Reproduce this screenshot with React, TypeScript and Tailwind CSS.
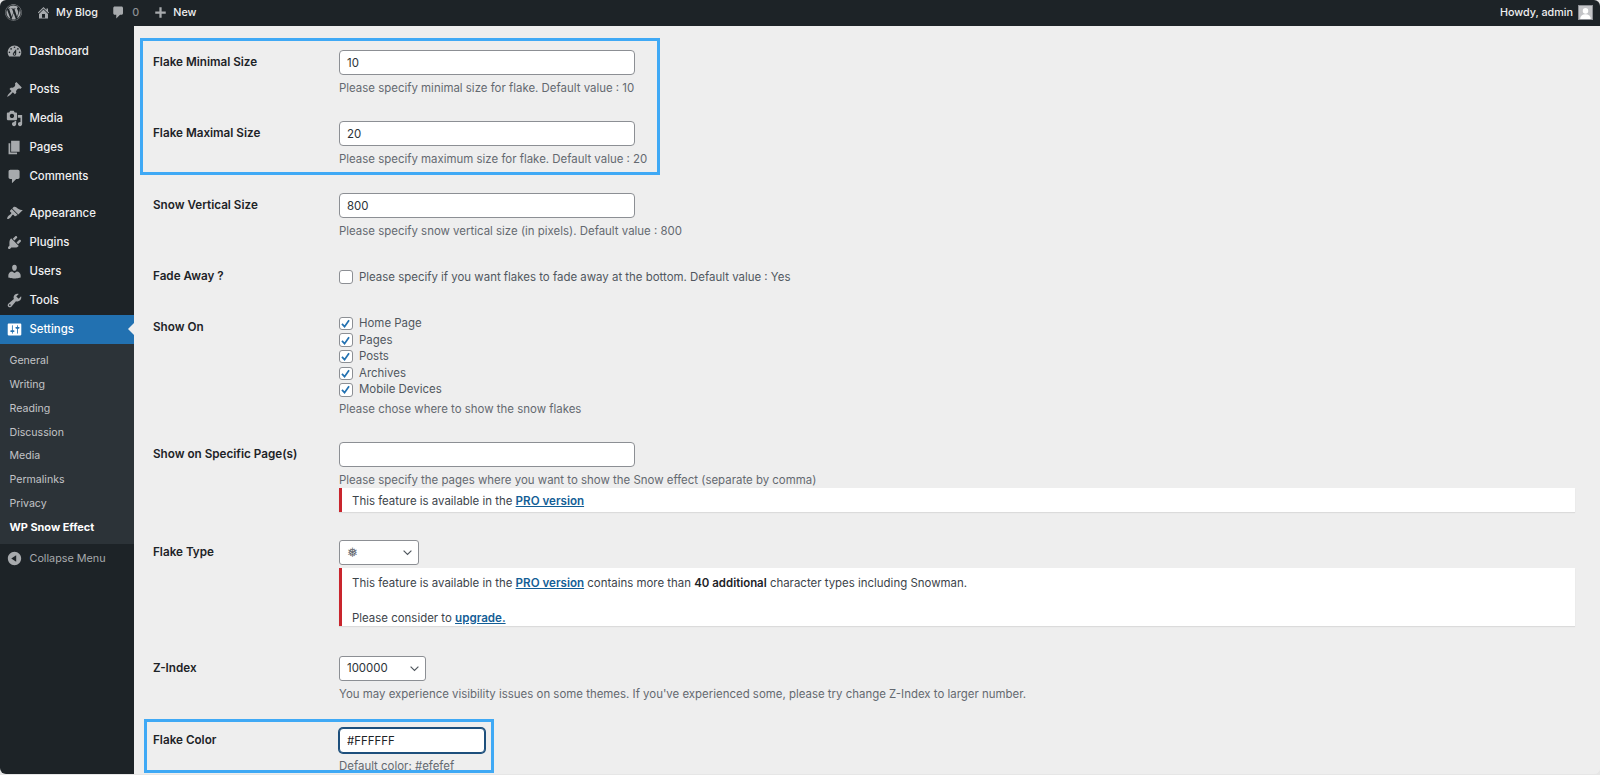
import React from 'react';
import { FaWordpress } from 'react-icons/fa';

const icons: Record<string, string> = {
  dashboard:
    'M3.76 16h12.48c1.1-1.37 1.76-3.11 1.76-5 0-4.42-3.58-8-8-8s-8 3.58-8 8c0 1.89.66 3.63 1.76 5zM10 4c.55 0 1 .45 1 1s-.45 1-1 1-1-.45-1-1 .45-1 1-1zM6 6c.55 0 1 .45 1 1s-.45 1-1 1-1-.45-1-1 .45-1 1-1zm8 0c.55 0 1 .45 1 1s-.45 1-1 1-1-.45-1-1 .45-1 1-1zm-5.37 5.55L12 7v6c0 1.1-.9 2-2 2s-2-.9-2-2c0-.57.24-1.08.63-1.45zM4 10c.55 0 1 .45 1 1s-.45 1-1 1-1-.45-1-1 .45-1 1-1zm12 0c.55 0 1 .45 1 1s-.45 1-1 1-1-.45-1-1 .45-1 1-1zm-5 3c0-.55-.45-1-1-1s-1 .45-1 1 .45 1 1 1 1-.45 1-1z',
  posts:
    'M10.44 3.02l1.82-1.82 6.36 6.35-1.83 1.82c-1.05-.68-2.48-.57-3.41.36l-.75.75c-.92.93-1.04 2.35-.35 3.41l-1.83 1.82-2.41-2.41-2.8 2.79c-.42.42-3.38 2.71-3.8 2.29s1.86-3.39 2.28-3.81l2.79-2.79L4.1 9.36l1.83-1.82c1.05.69 2.48.57 3.4-.36l.75-.75c.93-.92 1.05-2.35.36-3.41z',
  media:
    'M13 11V4c0-.55-.45-1-1-1h-1.67L9 1H5L3.67 3H2c-.55 0-1 .45-1 1v7c0 .55.45 1 1 1h10c.55 0 1-.45 1-1zM7 4.5c1.38 0 2.5 1.12 2.5 2.5S8.38 9.5 7 9.5 4.5 8.38 4.5 7 5.62 4.5 7 4.5zM14 6h5v10.5c0 1.38-1.12 2.5-2.5 2.5S14 17.88 14 16.5s1.12-2.5 2.5-2.5c.17 0 .34.02.5.05V9h-3V6zm-4 8.05V13h2v3.5c0 1.38-1.12 2.5-2.5 2.5S7 17.88 7 16.5 8.12 14 9.5 14c.17 0 .34.02.5.05z',
  pages: 'M6 15V2h10v13H6zm-1 1h8v2H3V5h2v11z',
  comments:
    'M5 2h9c1.1 0 2 .9 2 2v7c0 1.1-.9 2-2 2h-2l-5 5v-5H5c-1.1 0-2-.9-2-2V4c0-1.1.9-2 2-2z',
  appearance:
    'M14.48 11.06L7.41 3.99l1.5-1.5c.5-.56 2.3-.47 3.51.32 1.21.8 1.43 1.28 2.91 2.1 1.18.64 2.45 1.26 4.45.85zM13.77 11.77L6.7 4.7 4.93 6.47c-.39.39-.39 1.02 0 1.41l1.06 1.06c.39.39.39 1.03 0 1.42-.6.6-1.43 1.11-2.21 1.69-.35.26-.7.53-1.01.84-1.2 1.2-1.6 3-1.3 3.5s2.3-.1 3.5-1.3c.31-.31.58-.66.84-1.01.58-.78 1.09-1.61 1.69-2.21.39-.39 1.03-.39 1.42 0l1.06 1.06c.39.39 1.02.39 1.41 0z',
  plugins:
    'M13.11 4.36L9.87 7.6 8 5.73l3.24-3.24c.35-.34 1.05-.2 1.56.32.52.51.66 1.21.31 1.55zm-8 1.77l.91-1.12 9.01 9.01-1.19.84c-.71.71-2.63 1.16-3.82 1.16H6.14L4.9 17.26c-.59.59-1.54.59-2.12 0-.59-.58-.59-1.53 0-2.12l1.24-1.24v-3.88c0-1.13.4-3.19 1.09-3.89zm7.26 3.97l3.24-3.24c.34-.35 1.04-.21 1.55.31.52.51.66 1.21.31 1.55l-3.24 3.25z',
  users:
    'M10 9.25c-2.27 0-2.73-3.44-2.73-3.44C7 4.02 7.82 2 9.97 2c2.16 0 2.98 2.02 2.71 3.81 0 0-.41 3.44-2.68 3.44zm0 2.57L12.72 10c2.39 0 4.52 2.33 4.52 4.53v2.49s-3.65 1.13-7.24 1.13c-3.65 0-7.24-1.13-7.24-1.13v-2.49c0-2.25 1.94-4.48 4.47-4.48z',
  tools:
    'M16.68 9.77c-1.34 1.34-3.3 1.67-4.95.99l-5.41 6.52c-.99.99-2.59.99-3.58 0s-.99-2.59 0-3.57l6.52-5.42c-.68-1.65-.35-3.61.99-4.95 1.28-1.28 3.12-1.62 4.72-1.06l-2.89 2.89 2.82 2.82 2.86-2.87c.53 1.58.18 3.39-1.08 4.65zM3.81 16.21c.4.39 1.04.39 1.43 0 .4-.4.4-1.04 0-1.43-.39-.4-1.03-.4-1.43 0-.39.39-.39 1.03 0 1.43z',
  settings:
    'M18 16V4c0-.55-.45-1-1-1H3c-.55 0-1 .45-1 1v12c0 .55.45 1 1 1h14c.55 0 1-.45 1-1zM8 11h1c.55 0 1 .45 1 1s-.45 1-1 1H8v1.5c0 .28-.22.5-.5.5s-.5-.22-.5-.5V13H6c-.55 0-1-.45-1-1s.45-1 1-1h1V5.5c0-.28.22-.5.5-.5s.5.22.5.5V11zm5-2h-1c-.55 0-1-.45-1-1s.45-1 1-1h1V5.5c0-.28.22-.5.5-.5s.5.22.5.5V7h1c.55 0 1 .45 1 1s-.45 1-1 1h-1v5.5c0 .28-.22.5-.5.5s-.5-.22-.5-.5V9z',
  collapse:
    'M10 2.16c4.33 0 7.84 3.51 7.84 7.84s-3.51 7.84-7.84 7.84S2.16 14.33 2.16 10 5.71 2.16 10 2.16zm2 11.72V6.12L6.18 9.97z',
  home: 'M16 8.5l1.53 1.53-1.06 1.06L10 4.62l-6.47 6.47-1.06-1.06L10 2.5l4 4v-2h2v4zm-6-2.46l6 5.99V18H4v-5.97zM12 17v-5H8v5h4z',
  plus: 'M17 8.5v3h-5.5v5.5h-3v-5.5H3v-3h5.5V3h3v5.5z',
};

const Icon: React.FC<{ name: string; className?: string }> = ({ name, className }) => (
  <svg viewBox="0 0 20 20" fill="currentColor" className={className}>
    <path d={icons[name]} />
  </svg>
);

const Chevron = () => (
  <svg viewBox="0 0 20 20" fill="none" stroke="#50575e" strokeWidth="1.8" className="pointer-events-none absolute right-[5px] top-[6px] h-[13px] w-[13px]">
    <path d="M4 7l6 6 6-6" />
  </svg>
);

const MenuItem: React.FC<{ icon: string; label: string; active?: boolean }> = ({ icon, label, active }) => (
  <div className={active ? 'relative flex h-[29px] items-center bg-[#2271b1] text-white' : 'flex h-[29px] items-center text-[#f0f0f1]'}>
    <Icon name={icon} className={active ? 'ml-[5.5px] h-[17px] w-[17px] text-white' : 'ml-[5.5px] h-[17px] w-[17px] text-[#a7aaad]'} />
    <span className="ml-[7px]">{label}</span>
    {active && (
      <span className="absolute right-0 top-[8px] h-0 w-0 border-y-[6.5px] border-r-[6.5px] border-y-transparent border-r-[#eeeeee]" />
    )}
  </div>
);

const Sidebar = () => (
  <aside className="flex w-[134px] shrink-0 flex-col bg-[#1d2327] text-[11.4px] font-medium">
    <div className="pt-[11.25px]">
      <MenuItem icon="dashboard" label="Dashboard" />
    </div>
    <div className="pt-[9.25px]">
      <MenuItem icon="posts" label="Posts" />
      <MenuItem icon="media" label="Media" />
      <MenuItem icon="pages" label="Pages" />
      <MenuItem icon="comments" label="Comments" />
    </div>
    <div className="pt-[8px]">
      <MenuItem icon="appearance" label="Appearance" />
      <MenuItem icon="plugins" label="Plugins" />
      <MenuItem icon="users" label="Users" />
      <MenuItem icon="tools" label="Tools" />
      <MenuItem icon="settings" label="Settings" active />
    </div>
    <div className="bg-[#2c3338] pb-[5.2px] pt-[5.4px] text-[10.6px] font-normal text-[#c3c4c7]">
      {['General', 'Writing', 'Reading', 'Discussion', 'Media', 'Permalinks', 'Privacy'].map((item) => (
        <div key={item} className="flex h-[23.7px] items-center pl-[9.5px]">
          {item}
        </div>
      ))}
      <div className="flex h-[23.7px] items-center pl-[9.5px] text-[10.9px] font-bold text-white">WP Snow Effect</div>
    </div>
    <div className="flex h-[29px] items-center font-normal text-[#a7aaad]">
      <Icon name="collapse" className="ml-[5.5px] h-[17px] w-[17px]" />
      <span className="ml-[7px] text-[10.8px]">Collapse Menu</span>
    </div>
  </aside>
);

const TopBar = () => (
  <header className="flex h-[25.7px] shrink-0 items-center bg-[#1d2327] text-[10.75px] font-medium text-[#f0f0f1]">
    <FaWordpress className="ml-[5px] h-[17px] w-[17px] text-[#a7aaad]" />
    <Icon name="home" className="ml-[13.5px] h-[15px] w-[15px] text-[#a7aaad]" />
    <span className="ml-[5.5px]">My Blog</span>
    <Icon name="comments" className="ml-[13px] h-[15px] w-[15px] text-[#a7aaad]" />
    <span className="ml-[6.5px] text-[#8c8f94]">0</span>
    <Icon name="plus" className="ml-[14px] h-[15px] w-[15px] text-[#a7aaad]" />
    <span className="ml-[5px]">New</span>
    <span className="ml-auto">Howdy, admin</span>
    <div className="ml-[5px] mr-[7px] flex h-[15px] w-[15px] items-end justify-center overflow-hidden border border-[#8c8f94] bg-[#c3c4c7]">
      <svg viewBox="0 0 16 16" className="h-[13px] w-[13px]" fill="#fff">
        <circle cx="8" cy="6" r="3.4" />
        <path d="M1.5 16c0-4 2.5-6 6.5-6s6.5 2 6.5 6z" />
      </svg>
    </div>
  </header>
);

const Row: React.FC<{ label: string; children: React.ReactNode }> = ({ label, children }) => (
  <div className="grid grid-cols-[186px_1fr] py-[12.75px]">
    <div className="mt-[4px] text-[11.7px] font-semibold text-[#1d2327]">{label}</div>
    <div>{children}</div>
  </div>
);

const TextInput: React.FC<{ value?: string }> = ({ value }) => (
  <input
    type="text"
    defaultValue={value}
    className="block h-[25px] w-[296px] rounded-[4px] border border-[#8c8f94] bg-white px-[7px] pt-[1px] text-[11.45px] text-[#2c3338] outline-none"
  />
);

const Help: React.FC<{ children: React.ReactNode }> = ({ children }) => (
  <p className="mt-[5px] h-[16px] text-[#646970]">{children}</p>
);

const Check: React.FC<{ checked?: boolean }> = ({ checked }) => (
  <span className="flex h-[13.5px] w-[13.5px] shrink-0 items-center justify-center rounded-[3px] border border-[#8c8f94] bg-white">
    {checked && (
      <svg viewBox="0 0 14 14" className="h-[11px] w-[11px]" fill="none" stroke="#2271b1" strokeWidth="2.2">
        <path d="M2.5 7.5L5.8 11 11.5 3" />
      </svg>
    )}
  </span>
);

const ProLink: React.FC<{ children: React.ReactNode }> = ({ children }) => (
  <a className="text-[11.6px] font-semibold text-[#135e96] underline">{children}</a>
);

const Select: React.FC<{ value: string; widthClass: string; textClass: string }> = ({ value, widthClass, textClass }) => (
  <div className={`relative ${widthClass}`}>
    <select
      defaultValue={value}
      className={`block h-[25px] w-full appearance-none rounded-[3px] border border-[#8c8f94] bg-white pl-[7px] outline-none ${textClass}`}
    >
      <option value={value}>{value}</option>
    </select>
    <Chevron />
  </div>
);

const Main = () => (
  <main className="relative min-w-0 flex-1 overflow-hidden bg-[#eeeeee] pl-[19px] pr-[25px] pt-[11.25px] text-[11.45px] leading-[17px]">
    <Row label="Flake Minimal Size">
      <TextInput value="10" />
      <Help>Please specify minimal size for flake. Default value : 10</Help>
    </Row>
    <Row label="Flake Maximal Size">
      <TextInput value="20" />
      <Help>Please specify maximum size for flake. Default value : 20</Help>
    </Row>
    <Row label="Snow Vertical Size">
      <TextInput value="800" />
      <Help>Please specify snow vertical size (in pixels). Default value : 800</Help>
    </Row>
    <Row label="Fade Away ?">
      <div className="flex h-[25px] items-center pt-[1px] text-[#50575e]">
        <Check />
        <span className="ml-[6.5px]">Please specify if you want flakes to fade away at the bottom. Default value : Yes</span>
      </div>
    </Row>
    <Row label="Show On">
      <div className="mt-[0.5px]">
        {['Home Page', 'Pages', 'Posts', 'Archives', 'Mobile Devices'].map((item) => (
          <div key={item} className="flex h-[16.6px] items-center text-[#50575e]">
            <Check checked />
            <span className="ml-[6.5px]">{item}</span>
          </div>
        ))}
      </div>
      <p className="mt-[3px] h-[15px] text-[#646970]">Please chose where to show the snow flakes</p>
    </Row>
    <Row label="Show on Specific Page(s)">
      <TextInput />
      <Help>Please specify the pages where you want to show the Snow effect (separate by comma)</Help>
      <div className="mb-[3px] mt-[0.5px] flex h-[23.5px] items-center border-l-[3.5px] border-[#c9252d] bg-white pl-[10px] pt-[3px] text-[#3c434a] shadow-[0_1px_1px_rgba(0,0,0,0.08)]">
        <span>
          This feature is available in the <ProLink>PRO version</ProLink>
        </span>
      </div>
    </Row>
    <Row label="Flake Type">
      <Select value="❅" widthClass="w-[80px]" textClass="text-[13px] text-[#646970]" />
      <div className="mb-[4.5px] mt-[3px] h-[58px] border-l-[3.5px] border-[#c9252d] bg-white pl-[10px] pt-[6.5px] text-[#3c434a] shadow-[0_1px_1px_rgba(0,0,0,0.08)]">
        <p>
          This feature is available in the <ProLink>PRO version</ProLink> contains more than{' '}
          <b className="font-semibold text-[#1d2327]">40 additional</b> character types including Snowman.
        </p>
        <p className="mt-[18.5px]">
          Please consider to <ProLink>upgrade.</ProLink>
        </p>
      </div>
    </Row>
    <Row label="Z-Index">
      <Select value="100000" widthClass="w-[87px]" textClass="text-[11.45px] text-[#2c3338]" />
      <Help>You may experience visibility issues on some themes. If you've experienced some, please try change Z-Index to larger number.</Help>
    </Row>
    <Row label="Flake Color">
      <input
        type="text"
        defaultValue="#FFFFFF"
        className="block h-[25px] w-[146px] rounded-[4px] border border-[#1d4f7c] bg-white px-[7px] pt-[1px] text-[11.45px] text-[#1d2327] shadow-[0_0_0_1px_#1d4f7c] outline-none"
      />
      <Help>Default color: #efefef</Help>
    </Row>
    {/* callouts drawn over the form */}
    <div className="pointer-events-none absolute left-[6px] top-[12.3px] h-[137.5px] w-[520px] border-[3.5px] border-[#3fa9f5]" />
    <div className="pointer-events-none absolute left-[10px] top-[693.3px] h-[54px] w-[350px] border-[3.5px] border-[#3fa9f5]" />
  </main>
);

export default function App() {
  return (
    <div className="h-[775px] w-full overflow-hidden bg-[#e6e6e6] font-['Inter','DejaVu_Sans',sans-serif]">
      <div className="flex h-[773.5px] flex-col overflow-hidden rounded-[6px] bg-[#eeeeee]">
        <TopBar />
        <div className="flex min-h-0 flex-1">
          <Sidebar />
          <Main />
        </div>
      </div>
    </div>
  );
}
